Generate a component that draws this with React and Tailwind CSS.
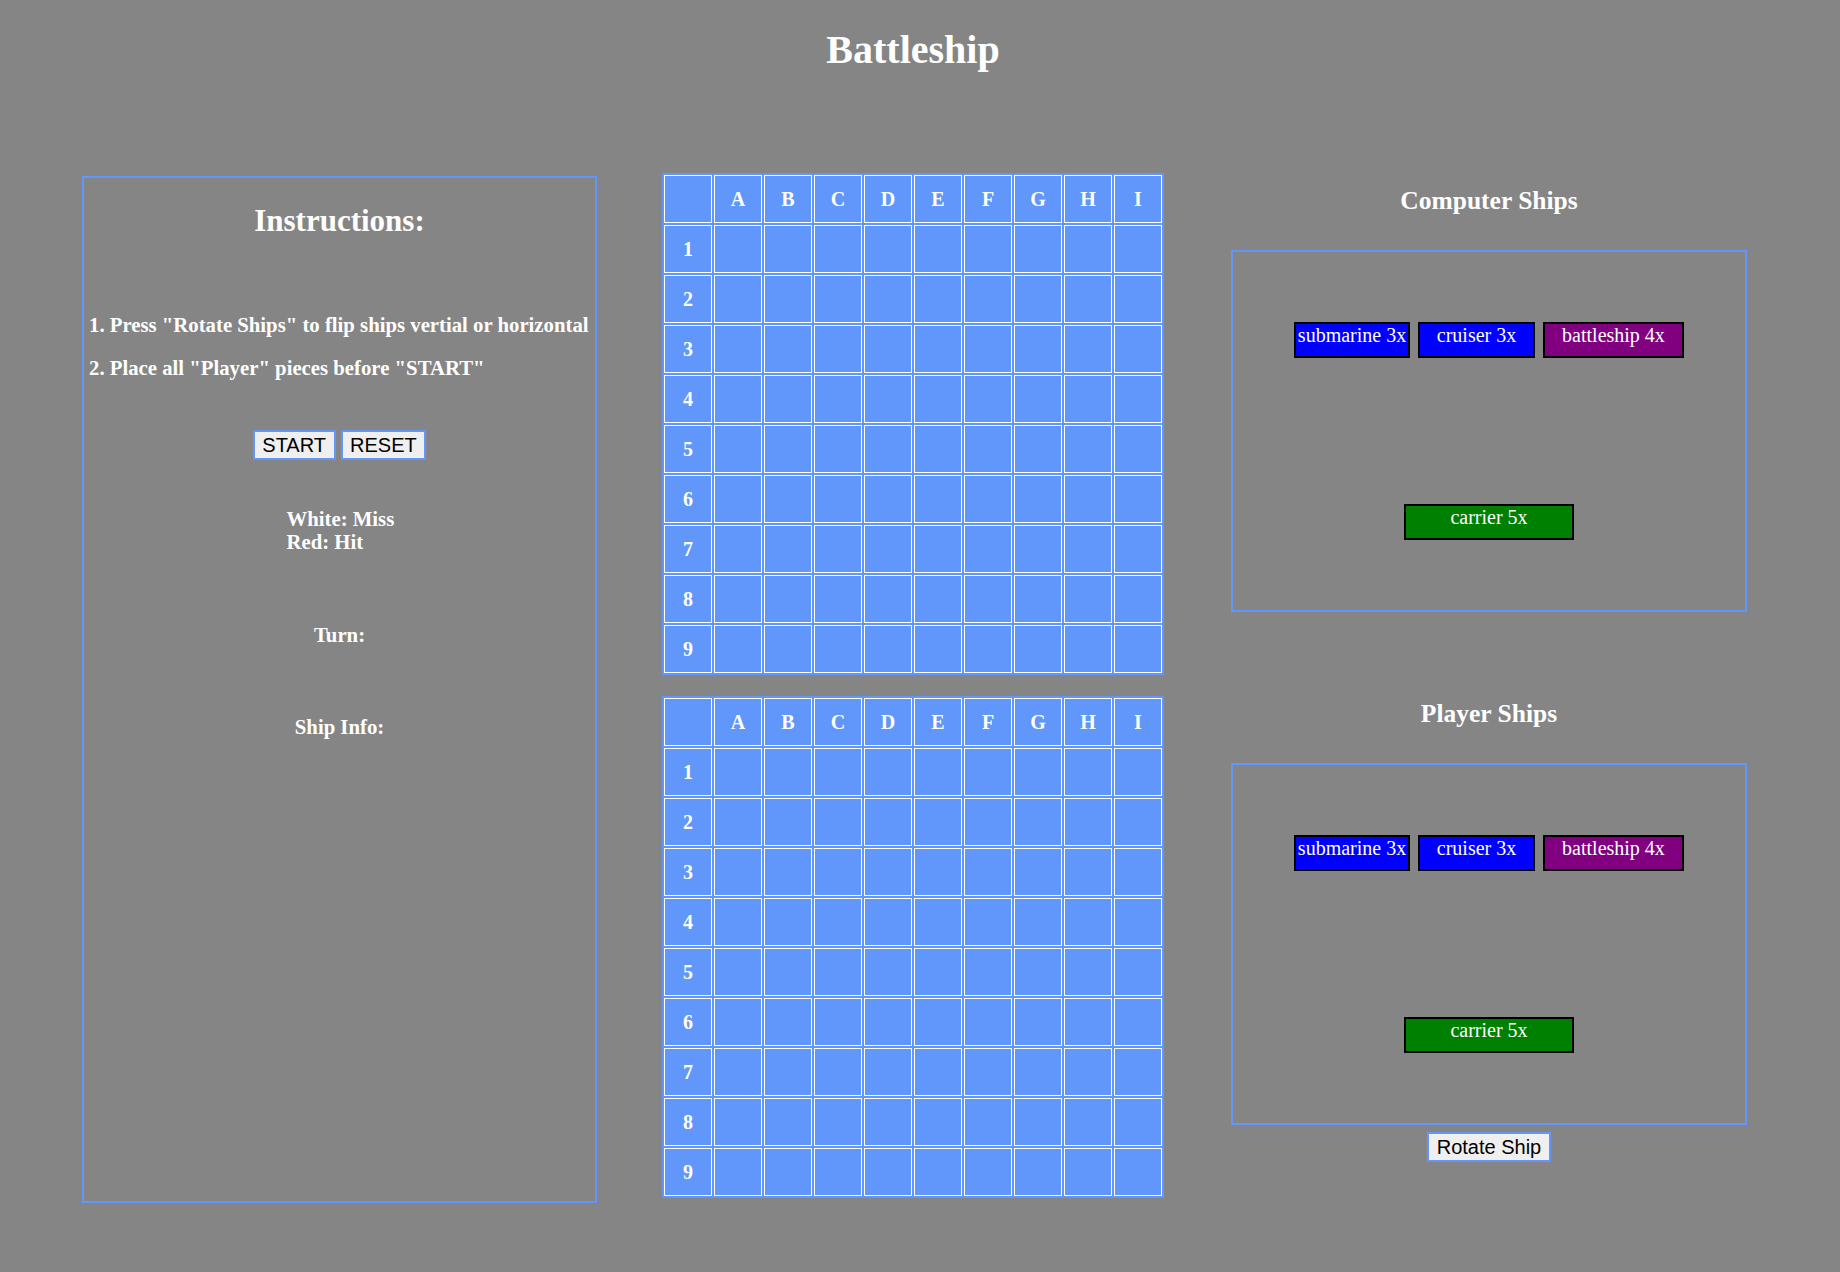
import React from 'react';

const COLS = ['A', 'B', 'C', 'D', 'E', 'F', 'G', 'H', 'I'];
const ROWS = [1, 2, 3, 4, 5, 6, 7, 8, 9];

// one 10x10 board (header row + header column)
function Board() {
  return (
    <div className="grid grid-cols-[repeat(10,48px)] gap-[2px] p-[2px] bg-[#6197fa] w-[502px]">
      <div className="h-[48px] border border-white" />
      {COLS.map((c) => (
        <div key={c} className="h-[48px] border border-white flex items-center justify-center text-[20px] leading-[23px] font-bold text-white">
          {c}
        </div>
      ))}
      {ROWS.map((r) => (
        <React.Fragment key={r}>
          <div className="h-[48px] border border-white flex items-center justify-center text-[20px] leading-[23px] font-bold text-white">
            {r}
          </div>
          {COLS.map((c) => (
            <div key={c + r} className="h-[48px] border border-white" />
          ))}
        </React.Fragment>
      ))}
    </div>
  );
}

function Ship({ name, w, bg }) {
  return (
    <div className={`h-[36px] border-2 border-black ${bg} ${w} text-white text-[20px] leading-[23px] text-center whitespace-nowrap overflow-hidden`}>
      {name}
    </div>
  );
}

function ShipBox() {
  return (
    <div className="w-[516px] h-[362px] border-2 border-[#6197fa] pt-[70px]">
      <div className="flex justify-center gap-[8px]">
        <Ship name="submarine 3x" w="w-[116px]" bg="bg-[#0000ff]" />
        <Ship name="cruiser 3x" w="w-[117px]" bg="bg-[#0000ff]" />
        <Ship name="battleship 4x" w="w-[141px]" bg="bg-[#800080]" />
      </div>
      <div className="flex justify-center mt-[146px]">
        <Ship name="carrier 5x" w="w-[170px]" bg="bg-[#008000]" />
      </div>
    </div>
  );
}

const btn = "bg-[#efefef] border-2 border-[#6197fa] px-[7.5px] py-[1.5px] text-[20px] leading-[23px] font-normal text-black font-['Liberation_Sans',Arial,sans-serif]";

export default function App() {
  return (
    <div className="min-h-screen w-full bg-[#858585] text-white font-['Liberation_Serif','Times_New_Roman',serif]">
      <h1 className="pt-[27px] pr-[14px] text-center text-[40px] leading-[46px] font-bold">Battleship</h1>

      <div className="flex items-start mt-[100px] pl-[82px]">
        {/* instructions */}
        <div className="w-[515px] h-[1027px] mt-[3px] border-2 border-[#6197fa] font-bold">
          <h2 className="mt-[25px] text-center text-[31px] leading-[36px]">Instructions:</h2>
          <p className="mt-[75px] pl-[5px] text-[20.75px] leading-[23px] whitespace-nowrap">
            1. Press "Rotate Ships" to flip ships vertial or horizontal
          </p>
          <p className="mt-[20px] pl-[5px] text-[20.75px] leading-[23px]">2. Place all "Player" pieces before "START"</p>
          <div className="mt-[50px] flex justify-center gap-[5px]">
            <button className={btn}>START</button>
            <button className={btn}>RESET</button>
          </div>
          <div className="mt-[48px] flex justify-center">
            <div className="text-[20.75px] leading-[23px] w-[106px] whitespace-nowrap">
              White: Miss
              <br />
              Red: Hit
            </div>
          </div>
          <p className="mt-[70px] text-center text-[20.75px] leading-[23px]">Turn:</p>
          <p className="mt-[69px] text-center text-[20.75px] leading-[23px]">Ship Info:</p>
        </div>

        {/* boards */}
        <div className="ml-[65px] flex flex-col gap-[21px]">
          <Board />
          <Board />
        </div>

        {/* ship pools */}
        <div className="ml-[67px] w-[516px] flex flex-col items-center">
          <h3 className="mt-[13px] text-[25.5px] leading-[29px] font-bold">Computer Ships</h3>
          <div className="mt-[35px]">
            <ShipBox />
          </div>
          <h3 className="mt-[87px] text-[25.5px] leading-[29px] font-bold">Player Ships</h3>
          <div className="mt-[35px]">
            <ShipBox />
          </div>
          <button className={`${btn} mt-[7px]`}>Rotate Ship</button>
        </div>
      </div>
    </div>
  );
}
